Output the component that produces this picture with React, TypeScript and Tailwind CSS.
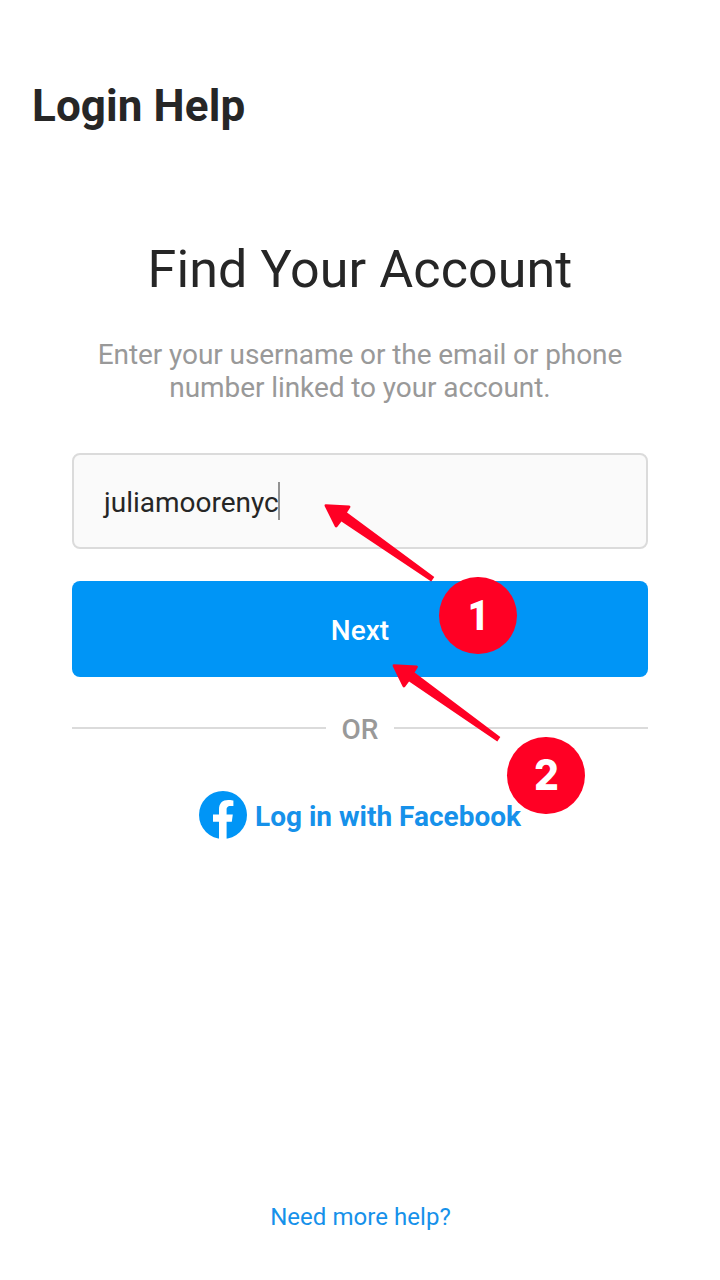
import React from "react";

function Arrow({ className }: { className: string }) {
  return (
    <svg className={className} viewBox="0 0 112 80" preserveAspectRatio="none" fill="#ff0024">
      <path d="M1.8 1.2 L25.2 2.5 Q27 2.9 26.2 4.6 L23 9.5 L110.3 74 L107.2 78.6 L17.4 18.6 L13.2 24 Q11.8 25.2 10.8 23.4 L0.7 3.2 Q0.1 1.3 1.8 1.2 Z" />
    </svg>
  );
}

export default function App() {
  return (
    <div className="relative flex h-[1280px] w-[720px] flex-col overflow-hidden bg-white font-['Roboto',sans-serif] text-[#262626]">
      <header className="px-8 pt-[78px]">
        <h1 className="text-[44px] leading-[56px] font-bold tracking-[0.1px]">Login Help</h1>
      </header>

      <main className="flex flex-col px-[72px] pt-[104px]">
        <h2 className="text-center text-[52px] leading-[64px] tracking-[0.1px]">Find Your Account</h2>
        <p className="mt-9 text-center text-[28px] leading-[33px] tracking-[-0.08px] text-[#999999]">
          Enter your username or the email or phone
          <br />
          number linked to your account.
        </p>
        <div className="mt-[49px] flex h-24 items-center rounded-lg border-2 border-[#dbdbdb] bg-[#fafafa] pl-[30px]">
          <span className="pt-1 text-[28px] leading-8">juliamoorenyc</span>
          <span className="-ml-px h-[38px] w-[2px] bg-[#929292]" />
        </div>
        <button className="mt-8 h-24 rounded-lg bg-[#0095f6] pt-1 text-[28px] leading-8 font-medium text-white">
          Next
        </button>
        <div className="mt-[31px] flex h-10 items-center">
          <span className="h-[2px] flex-1 bg-[#dbdbdb]" />
          <span className="px-4 pt-1 text-[28px] leading-8 font-medium text-[#999999]">OR</span>
          <span className="h-[2px] flex-1 bg-[#dbdbdb]" />
        </div>
        <a className="mt-[43px] flex h-12 items-center justify-center gap-2 text-[28px] font-bold text-[#1691ea]">
          <svg width="48" height="48" viewBox="0 0 48 48">
            <circle cx="24" cy="24" r="24" fill="#0095f6" />
            <path
              d="M20 48V30.8h-6v-7.3h6v-5.2c0-6.1 3.6-9.3 9.2-9.3 2.7 0 5.2.5 5.2.5v5.6h-3c-3 0-3.8 1.8-3.8 3.7v4.7h6.2l-1 7.3h-5.2V48z"
              fill="#fff"
            />
          </svg>
          <span className="pt-1 leading-8">Log in with Facebook</span>
        </a>
      </main>

      <footer className="mt-auto pb-[47px] pl-px text-center text-2xl tracking-[0.05px] text-[#1691ea]">
        <a>Need more help?</a>
      </footer>

      <Arrow className="absolute top-[503px] left-[324px] h-20 w-28" />
      <Arrow className="absolute top-[663px] left-[392px] h-20 w-[110px]" />
      <span className="absolute top-[577px] left-[439px] flex h-[77px] w-[78px] items-center justify-center rounded-full bg-[#ff0024] font-['Roboto',sans-serif] text-[43px] leading-none font-black text-white">
        <span className="scale-x-[0.86]">1</span>
      </span>
      <span className="absolute top-[737px] left-[507px] flex h-[77px] w-[78px] items-center justify-center rounded-full bg-[#ff0024] pb-px font-['Inter',sans-serif] text-[42px] leading-none font-extrabold text-white">
        <span className="scale-x-[0.93]">2</span>
      </span>
    </div>
  );
}
